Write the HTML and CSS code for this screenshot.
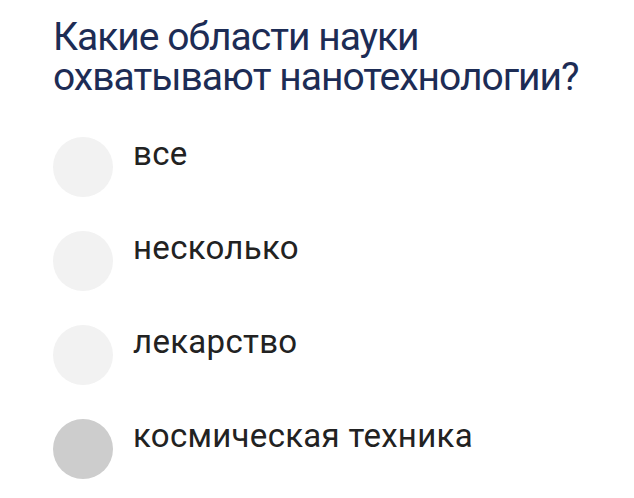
FILE: index.html
```html
<!DOCTYPE html>
<html lang="ru">
<head>
<meta charset="utf-8">
<title>Вопрос</title>
<link rel="stylesheet" href="styles.css">
</head>
<body>
<main class="quiz">
  <h1 class="question">Какие области науки<br>охватывают нанотехнологии?</h1>
  <ul class="options">
    <li class="option"><span class="radio"></span><span class="label">все</span></li>
    <li class="option"><span class="radio"></span><span class="label">несколько</span></li>
    <li class="option"><span class="radio"></span><span class="label">лекарство</span></li>
    <li class="option"><span class="radio radio-dark"></span><span class="label">космическая техника</span></li>
  </ul>
</main>
</body>
</html>
```

FILE: styles.css
```css
html, body {
  margin: 0;
  padding: 0;
  background: #ffffff;
}
.quiz {
  padding: 17px 0 0 53px;
  font-family: Roboto, "Noto Sans", sans-serif;
}
.question {
  margin: 0;
  font-size: 39px;
  line-height: 40px;
  font-weight: 400;
  letter-spacing: -1px;
  color: #1d2c55;
}
.options {
  list-style: none;
  margin: 40px 0 0 0;
  padding: 0;
  display: flex;
  flex-direction: column;
  gap: 34px;
}
.option {
  display: flex;
  align-items: flex-start;
  gap: 20px;
}
.radio {
  flex: none;
  width: 60px;
  height: 60px;
  border-radius: 50%;
  background: #f2f2f2;
}
.radio-dark {
  background: #cdcdcd;
}
.label {
  font-size: 33px;
  line-height: 38px;
  letter-spacing: 0.3px;
  margin-top: -2px;
  color: #222222;
}
```
